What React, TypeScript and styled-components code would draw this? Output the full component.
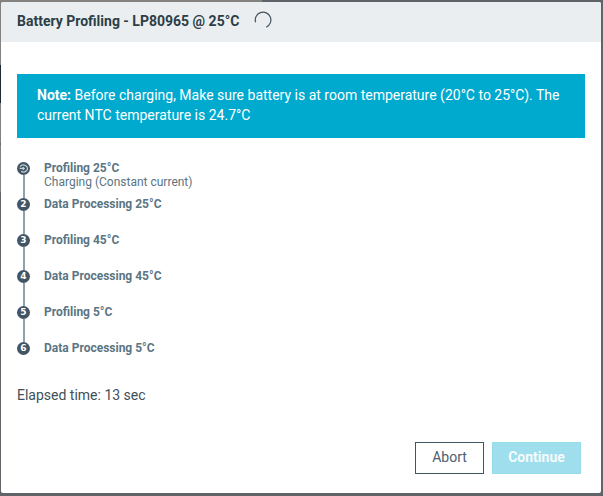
import React from "react";
import styled, { createGlobalStyle } from "styled-components";

const GlobalStyle = createGlobalStyle`
  * { box-sizing: border-box; }
  body { margin: 0; overflow: hidden; font-family: Roboto, "Liberation Sans", sans-serif; }
`;

const Backdrop = styled.div`
  position: relative;
  display: flex;
  width: 603px;
  height: 496px;
  padding: 2px 2px 3px 1px;
  background: linear-gradient(90deg, #85817f 262px, #606367 262px) top / 100% 2px no-repeat, #606367;
`;

const PageEdge = styled.div`
  position: absolute;
  left: 0;
  top: 0;
  width: 1px;
  height: 192px;
  background: linear-gradient(#85817f 65px, #202a33 65px 103px, #85817f 103px 143px, #65666a 143px 145px, #85817f 145px);
`;

const Dialog = styled.section`
  display: flex;
  flex-direction: column;
  flex: 1;
  overflow: hidden;
  border-radius: 2px;
  background: #fff;
`;

const Header = styled.header`
  display: flex;
  align-items: center;
  gap: 15px;
  height: 40px;
  padding: 0 16px 2px;
  background: #eaeef1;
`;

const Title = styled.h1`
  margin: 0;
  color: #2c3e46;
  font-size: 14px;
  font-weight: 700;
  line-height: 20px;
  white-space: nowrap;
`;

const Spinner = styled.svg`
  display: block;
  width: 18px;
  height: 18px;
  margin-top: -2px;
`;

const Body = styled.main`
  display: flex;
  flex-direction: column;
  flex: 1;
  padding: 32px 20px 19px 16px;
`;

const Notice = styled.p`
  width: 568px;
  height: 64px;
  margin: 0;
  padding: 11px 20px 13px;
  background: #00a9ce;
  color: #fff;
  font-size: 14px;
  line-height: 20px;
`;

const Steps = styled.ol`
  display: flex;
  flex-direction: column;
  margin: 23px 0 0;
  padding: 0;
  list-style: none;
`;

const Step = styled.li`
  display: flex;
  gap: 14px;
  height: 36px;
  color: #5b7583;
  font-size: 12px;
  line-height: 14px;
`;

const Marker = styled.div`
  display: flex;
  flex-direction: column;
  width: 13px;
  padding-top: 1px;
`;

const Badge = styled.span`
  display: flex;
  align-items: center;
  justify-content: center;
  flex: none;
  width: 13px;
  height: 13px;
  border-radius: 50%;
  background: #425563;
  color: #fff;
  font-family: "DejaVu Sans", Roboto, sans-serif;
  font-size: 9px;
  font-weight: 700;
  line-height: 13px;
`;

const Connector = styled.span`
  width: 2px;
  height: 24px;
  margin: 0 0 -1px 6px;
  background: #8da3af;
`;

const StepTitle = styled.div`
  font-weight: 700;
`;

const Elapsed = styled.p`
  margin: 8px 0 0;
  color: #3f5059;
  font-size: 14px;
  line-height: 20px;
`;

const Actions = styled.footer`
  display: flex;
  justify-content: flex-end;
  gap: 8px;
  margin-top: auto;
`;

const Button = styled.button<{ $primary?: boolean; $width: number }>`
  width: ${(p) => p.$width}px;
  height: 32px;
  padding: 0 0 2px;
  border: 1px solid ${(p) => (p.$primary ? "#98dbe9" : "#425563")};
  background: ${(p) => (p.$primary ? "#9fdeec" : "#fff")};
  color: ${(p) => (p.$primary ? "#f4fcfe" : "#4d606c")};
  font-family: inherit;
  font-size: 14px;
  font-weight: ${(p) => (p.$primary ? 700 : 400)};
`;

const steps = [
  { title: "Profiling 25°C", detail: "Charging (Constant current)" },
  { title: "Data Processing 25°C" },
  { title: "Profiling 45°C" },
  { title: "Data Processing 45°C" },
  { title: "Profiling 5°C" },
  { title: "Data Processing 5°C" },
];

function RunningIcon() {
  return (
    <svg width="13" height="13" viewBox="0 0 13 13" fill="none" stroke="#c8d1d7" strokeWidth="1.2">
      <path d="M3 4.6A4.1 3.4 0 1 1 4.2 9.4M2.6 6.4h4.4M5.8 5.1l1.4 1.3L5.8 7.7" />
    </svg>
  );
}

export default function App() {
  return (
    <>
      <GlobalStyle />
      <Backdrop>
        <PageEdge />
        <Dialog>
          <Header>
            <Title>Battery Profiling - LP80965 @ 25°C</Title>
            <Spinner viewBox="0 0 18 18" fill="none" stroke="#43525b" strokeWidth="1.2">
              <path d="M1.6 11.3A7.8 7.8 0 1 1 12.3 16.1" />
            </Spinner>
          </Header>
          <Body>
            <Notice>
              <strong>Note:</strong> Before charging, Make sure battery is at room temperature (20°C to 25°C). The
              current NTC temperature is 24.7°C
            </Notice>
            <Steps>
              {steps.map((step, i) => (
                <Step key={step.title}>
                  <Marker>
                    <Badge>{i === 0 ? <RunningIcon /> : i + 1}</Badge>
                    {i < steps.length - 1 && <Connector />}
                  </Marker>
                  <div>
                    <StepTitle>{step.title}</StepTitle>
                    {step.detail}
                  </div>
                </Step>
              ))}
            </Steps>
            <Elapsed>Elapsed time: 13 sec</Elapsed>
            <Actions>
              <Button $width={69}>Abort</Button>
              <Button $width={89} $primary disabled>Continue</Button>
            </Actions>
          </Body>
        </Dialog>
      </Backdrop>
    </>
  );
}
